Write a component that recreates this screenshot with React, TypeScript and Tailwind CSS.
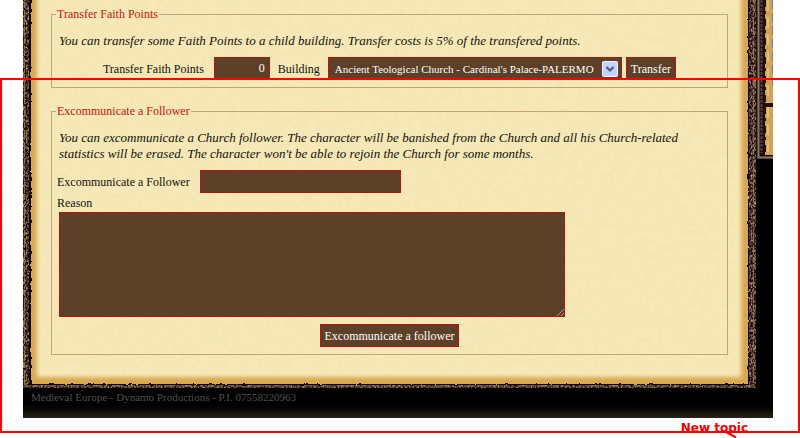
import React, { useState } from 'react';

const BUILDINGS = ["Ancient Teological Church - Cardinal's Palace-PALERMO"];

const control = 'h-[23px] border border-[#b81212] bg-[#5c4028] text-white';

// Worn, burnt edge around the parchment
function ParchmentFrame() {
  return (
    <svg className="absolute inset-0 h-full w-full" aria-hidden="true">
      <defs>
        <filter id="rough" x="-5%" y="-5%" width="110%" height="110%">
          <feTurbulence type="fractalNoise" baseFrequency="0.2" numOctaves="2" seed="4" result="n" />
          <feDisplacementMap in="SourceGraphic" in2="n" scale="3" xChannelSelector="R" yChannelSelector="G" />
        </filter>
        <filter id="soft" x="-5%" y="-5%" width="110%" height="110%">
          <feGaussianBlur stdDeviation="2" />
        </filter>
        <filter id="speckle" x="0" y="0" width="100%" height="100%">
          <feTurbulence type="fractalNoise" baseFrequency="0.6 0.4" numOctaves="2" seed="9" />
          <feColorMatrix values="0 0 0 0 0.56  0 0 0 0 0.38  0 0 0 0 0.22  2.4 0 0 0 -0.95" />
        </filter>
        <filter id="grain" x="0" y="0" width="100%" height="100%">
          <feTurbulence type="fractalNoise" baseFrequency="0.35" numOctaves="2" seed="6" />
          <feColorMatrix values="0 0 0 0 0.58  0 0 0 0 0.36  0 0 0 0 0.1  2.4 0 0 0 -1.1" />
        </filter>
        <filter id="paper" x="0" y="0" width="100%" height="100%">
          <feTurbulence type="fractalNoise" baseFrequency="0.14" numOctaves="4" seed="2" />
          <feColorMatrix values="0 0 0 0 0.7  0 0 0 0 0.6  0 0 0 0 0.42  0.9 0 0 0 -0.35" />
        </filter>
      </defs>
      <rect width="100%" height="100%" fill="#1d0f08" />
      <rect width="100%" height="100%" filter="url(#speckle)" />
      <rect
        x="1.5"
        y="-10"
        fill="none"
        stroke="#8f7252"
        strokeDasharray="6 1 3 2"
        style={{ width: 'calc(100% - 4px)', height: 'calc(100% + 8px)' }}
      />
      <svg x="6" y="-20" width="100%" height="100%" overflow="visible">
        <g filter="url(#rough)">
          <rect fill="#0c0502" style={{ width: 'calc(100% - 13px)', height: 'calc(100% + 17px)' }} />
        </g>
        <g filter="url(#rough)">
          <rect x="2" fill="#d9a850" style={{ width: 'calc(100% - 16px)', height: 'calc(100% + 16px)' }} />
        </g>
        <rect x="4" opacity="0.7" filter="url(#grain)" style={{ width: 'calc(100% - 20px)', height: 'calc(100% + 13px)' }} />
        <g filter="url(#soft)">
          <rect x="8" fill="#f6e9b7" style={{ width: 'calc(100% - 29px)', height: 'calc(100% + 9px)' }} />
        </g>
        <rect x="12" opacity="0.35" filter="url(#paper)" style={{ width: 'calc(100% - 36px)', height: 'calc(100% + 5px)' }} />
      </svg>
    </svg>
  );
}

function SideBorder() {
  return (
    <svg className="h-[159px] w-[17px] shrink-0" viewBox="0 0 17 159" aria-hidden="true">
      <rect width="17" height="159" fill="#1d0f0c" />
      <path d="M2.5 0V157.5H17" fill="none" stroke="#927468" strokeWidth="2" />
      <path d="M5.5 0V153" stroke="#5d4239" strokeWidth="2" strokeDasharray="3 1" />
      <rect x="9" width="8" height="103" fill="#d1a352" />
      <rect x="9" y="107" width="8" height="48" fill="#d1a352" />
      <path d="M9 0V103M9 107V155" stroke="#1d0f0c" strokeWidth="2" strokeDasharray="7 4 3 5" />
      <path d="M12 0V103M12 107V155" stroke="#e3c078" strokeWidth="2" strokeDasharray="11 6" />
      <path d="M16.5 0V86" stroke="#5c8ca5" strokeDasharray="9 4" />
    </svg>
  );
}

function Panel({ title, children }: { title: string; children: React.ReactNode }) {
  return (
    <fieldset className="border border-[#bfa67a] px-1 pb-[7px]">
      <legend className="px-px text-[#cc1111]">{title}</legend>
      {children}
    </fieldset>
  );
}

function TransferPanel() {
  const [points, setPoints] = useState('0');

  return (
    <Panel title="Transfer Faith Points">
      <p className="mt-[11px] px-[3px] text-[13px] italic">
        You can transfer some Faith Points to a child building. Transfer costs is 5% of the transfered points.
      </p>
      <div className="mt-2 flex items-center justify-center">
        <label htmlFor="points">Transfer Faith Points</label>
        <input
          id="points"
          className={`${control} ml-2.5 w-14 px-1 text-right`}
          value={points}
          onChange={(e) => setPoints(e.target.value)}
        />
        <label htmlFor="building" className="ml-2">Building</label>
        <div className="relative ml-2">
          <select id="building" className={`${control} w-[294px] appearance-none pl-1.5 text-[11px]`}>
            {BUILDINGS.map((b) => (
              <option key={b}>{b}</option>
            ))}
          </select>
          <svg className="pointer-events-none absolute top-1 right-1 h-4 w-4" viewBox="0 0 16 16" aria-hidden="true">
            <rect x="0.5" y="0.5" width="15" height="15" rx="1" fill="#c3d3fb" stroke="#eef3ff" />
            <path d="M4.5 6L8 9.5L11.5 6" fill="none" stroke="#465a82" strokeWidth="2.2" />
          </svg>
        </div>
        <button type="button" className={`${control} ml-1 px-1`}>Transfer</button>
      </div>
    </Panel>
  );
}

function ExcommunicatePanel() {
  return (
    <Panel title="Excommunicate a Follower">
      <p className="mt-[11px] px-[3px] text-[13px] italic">
        You can excommunicate a Church follower. The character will be banished from the Church and all his Church-related
        statistics will be erased. The character won't be able to rejoin the Church for some months.
      </p>
      <div className="mt-2 flex items-center px-px">
        <label htmlFor="follower">Excommunicate a Follower</label>
        <input id="follower" className={`${control} ml-2.5 w-[201px] px-1`} />
      </div>
      <label htmlFor="reason" className="mt-0.5 block px-px">Reason</label>
      <div className="relative ml-[3px] mt-px w-[506px] max-w-full">
        <textarea
          id="reason"
          className="block h-[105px] w-full resize-none border border-[#b81212] bg-[#5c4028] p-1 text-white"
        />
        <svg className="absolute right-px bottom-px h-2 w-2" viewBox="0 0 8 8" aria-hidden="true">
          <path d="M1 8L8 1M5 8L8 5" stroke="#a89a8c" />
        </svg>
      </div>
      <div className="mt-[7px] text-center">
        <button type="button" className={`${control} px-1`}>Excommunicate a follower</button>
      </div>
    </Panel>
  );
}

export default function App() {
  return (
    <div className="relative min-h-screen overflow-hidden bg-white font-['Liberation_Serif',serif] text-[12px] leading-4 text-[#14110a]">
      <div className="mr-[27px] ml-[23px] bg-black">
        <div className="flex items-start">
          <main className="relative flex-1">
            <ParchmentFrame />
            <div className="relative flex flex-col gap-[15px] px-7 pt-1.5 pb-[33px]">
              <TransferPanel />
              <ExcommunicatePanel />
            </div>
          </main>
          <SideBorder />
        </div>
        <footer className="h-[30px] bg-linear-to-b from-black from-40% to-[#29251a] px-2 pt-px text-[11px] text-[#505050]">
          Medieval Europe - Dynamo Productions - P.I. 07558220963
        </footer>
      </div>

      <div className="pt-0.5 pr-[52px] text-right font-['DejaVu_Sans',sans-serif] text-[12px] font-bold text-[#f00000]">
        New topic
      </div>

      {/* Highlighted area */}
      <div className="pointer-events-none absolute inset-x-0 top-[78px] bottom-[5px] border-2 border-[#ff0000]" />
      <svg className="absolute right-[60px] bottom-0 h-1.5 w-4" viewBox="0 0 16 6" aria-hidden="true">
        <path d="M2 0L12 5.5" stroke="#ff0000" strokeWidth="2" />
      </svg>
    </div>
  );
}
